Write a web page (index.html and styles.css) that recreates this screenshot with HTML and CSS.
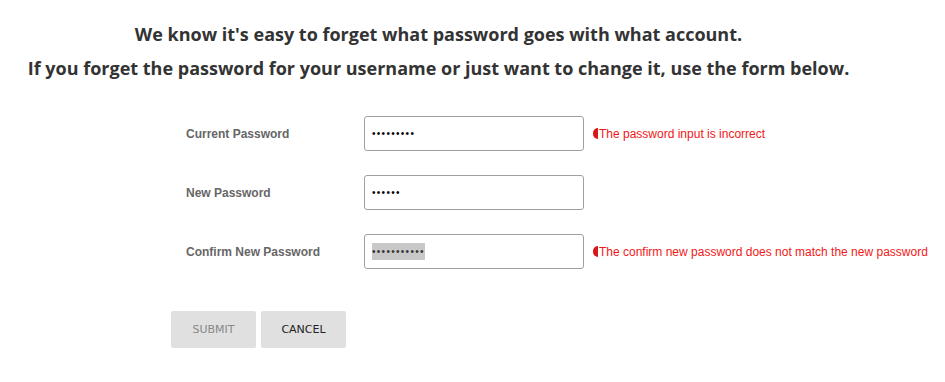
FILE: index.html
```html
<!DOCTYPE html>
<html lang="en">
<head>
<meta charset="UTF-8">
<title>Change Password</title>
<link rel="stylesheet" href="styles.css">
</head>
<body>
<div class="page">
    <div class="intro">
        <p>We know it's easy to forget what password goes with what account.</p>
        <p>If you forget the password for your username or just want to change it, use the form below.</p>
    </div>

    <form class="pwd-form">
        <div class="row">
            <label class="label">Current Password</label>
            <input class="field" type="password" value="123456789">
            <span class="error"><i class="err-icon"></i>The password input is incorrect</span>
        </div>
        <div class="row">
            <label class="label">New Password</label>
            <input class="field" type="password" value="123456">
        </div>
        <div class="row">
            <label class="label">Confirm New Password</label>
            <div class="field selected"><span class="sel">•••••••••••</span></div>
            <span class="error"><i class="err-icon"></i>The confirm new password does not match the new password</span>
        </div>

        <div class="actions">
            <button type="button" class="btn disabled">SUBMIT</button>
            <button type="button" class="btn">CANCEL</button>
        </div>
    </form>
</div>
</body>
</html>
```

FILE: styles.css
```css
body {
    margin: 0;
    background: #fff;
    font-family: 'Liberation Sans', Arial, sans-serif;
}
.page {
    width: 877px;
    padding-top: 22px;
}
.intro {
    text-align: center;
    font-family: 'Open Sans', sans-serif;
    font-weight: 700;
    font-size: 18px;
    color: #333;
}
.intro p {
    margin: 0 0 10px 0;
    line-height: 24px;
}
.pwd-form {
    padding: 26px 0 0 171px;
}
.row {
    display: flex;
    align-items: center;
    height: 35px;
    margin-bottom: 24px;
    padding-left: 15px;
}
.label {
    width: 178px;
    flex-shrink: 0;
    font-size: 12px;
    font-weight: bold;
    color: #666;
}
.field {
    box-sizing: border-box;
    flex-shrink: 0;
    width: 220px;
    height: 35px;
    border: 1px solid #a0a0a0;
    border-radius: 3px;
    padding: 0 7px;
    font-size: 10px;
    letter-spacing: 1.3px;
    color: #000;
    outline: none;
    margin: 0;
}
.field.selected {
    display: flex;
    align-items: center;
}
.sel {
    background: #c8c8c8;
    color: #333;
    font-size: 10px;
    line-height: 17px;
    letter-spacing: 1.3px;
}
.error {
    display: flex;
    align-items: center;
    margin-left: 9px;
    white-space: nowrap;
    font-size: 12px;
    color: #f01818;
}
.err-icon {
    display: inline-block;
    width: 5px;
    height: 11px;
    border-radius: 5px 0 0 5px;
    background: #d81818;
    margin-right: 1px;
}
.actions {
    display: flex;
    gap: 5px;
    margin-top: 42px;
}
.btn {
    width: 85px;
    height: 37px;
    border: none;
    border-radius: 2px;
    background: #e0e0e0;
    font-family: 'DejaVu Sans', sans-serif;
    font-size: 11px;
    color: #222;
    cursor: pointer;
}
.btn.disabled {
    color: #888;
}
```
